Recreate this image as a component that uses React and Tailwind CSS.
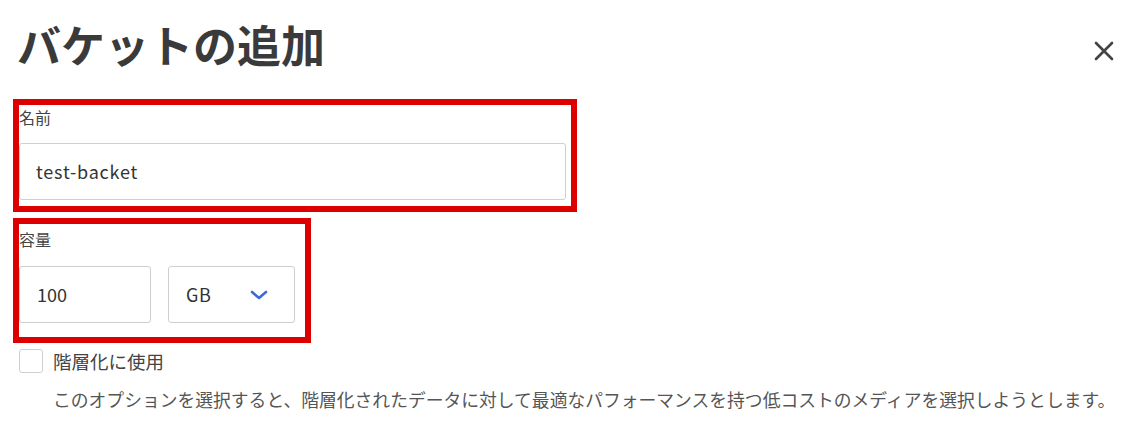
import React from 'react';

function App() {
  return (
    <div className="w-[1145px] h-[429px] overflow-hidden bg-white pl-[13px] font-['Noto_Sans_CJK_JP','Noto_Sans',sans-serif] text-[#444]">
      {/* Header: title + close */}
      <div className="flex items-start justify-between">
        <h1 className="mt-[22px] ml-[4px] text-[44px] leading-[44px] font-bold text-[#3a3a3a]">バケットの追加</h1>
        <button className="mt-[40px] mr-[30px] text-[#444]">
          <svg width="22" height="22" viewBox="0 0 22 22" fill="none" stroke="currentColor" strokeWidth="2.6" strokeLinecap="round">
            <path d="M3 3l16 16M19 3L3 19" />
          </svg>
        </button>
      </div>

      {/* Name field (highlighted) */}
      <div className="mt-[33px] w-[564px] border-[6px] border-[#dd0000] pr-[5px] pb-[6px]">
        <label className="block text-[16px] leading-[24px]">名前</label>
        <div className="mt-[14px] flex h-[57px] items-center rounded-[3px] border border-[#cfcfcf] pl-[16px] text-[18px] tracking-[0.8px] text-[#333]">
          test-backet
        </div>
      </div>

      {/* Capacity field (highlighted) */}
      <div className="mt-[6px] w-[298px] border-[6px] border-[#dd0000] pt-[3px] pb-[14px]">
        <label className="block text-[16px] leading-[24px]">容量</label>
        <div className="mt-[15px] flex gap-[17px]">
          <div className="flex h-[57px] w-[132px] items-center rounded-[3px] border border-[#cfcfcf] pl-[17px] text-[18px] text-[#333]">
            100
          </div>
          <div className="flex h-[57px] w-[127px] items-center justify-between rounded-[3px] border border-[#cfcfcf] pl-[17px] pr-[26px] text-[18px] tracking-[0.5px] text-[#333]">
            <span>GB</span>
            <svg width="18" height="10" viewBox="0 0 18 10" fill="none" stroke="#3d6bd6" strokeWidth="2.6" strokeLinecap="round" strokeLinejoin="round">
              <path d="M2 2l7 6 7-6" />
            </svg>
          </div>
        </div>
      </div>

      {/* Tiering checkbox */}
      <div className="mt-[5px] ml-[6px] flex items-center gap-[10px]">
        <div className="h-[24px] w-[24px] rounded-[3px] border border-[#cfcfcf] bg-white" />
        <span className="text-[18.5px] leading-[26px] text-[#444]">階層化に使用</span>
      </div>
      <p className="mt-[13px] ml-[40px] whitespace-nowrap text-[17.8px] leading-[24px] text-[#555]">
        このオプションを選択すると、階層化されたデータに対して最適なパフォーマンスを持つ低コストのメディアを選択しようとします。
      </p>
    </div>
  );
}

export default App;
